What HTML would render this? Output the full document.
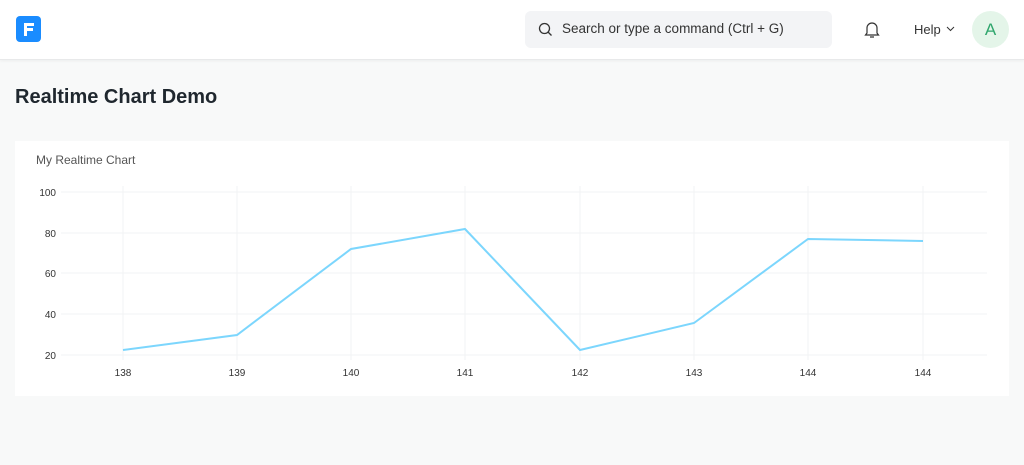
<!DOCTYPE html><html><head><style>
body{margin:0;width:1024px;height:465px;background:#f8f9f9;font-family:"Liberation Sans",sans-serif;overflow:hidden;position:relative}
.nav{position:absolute;top:0;left:0;width:1024px;height:59px;background:#fff;border-bottom:1px solid #e8e9ea;box-shadow:0 1px 3px rgba(0,0,0,.05)}
.logo{position:absolute;left:16px;top:16px;width:25px;height:26px;background:#1a8cff;border-radius:4px}
.search{position:absolute;left:525px;top:11px;width:307px;height:37px;background:#f3f4f6;border-radius:6px;font-size:13.5px;color:#333}
h1{position:absolute;left:15px;top:86px;margin:0;font-size:20px;font-weight:bold;color:#1f272e}
.card{position:absolute;left:15px;top:141px;width:994px;height:255px;background:#fff}
</style></head><body>
<div class="nav">
<div class="logo"><svg width="25" height="26"><path d="M8 7h10v3h-7v2h6v3h-6v5h-3z" fill="#fff"/></svg></div>
<div class="search"><svg style="position:absolute;left:13px;top:11px" width="15" height="15"><circle cx="6.5" cy="6.5" r="5" fill="none" stroke="#333" stroke-width="1.3"/><path d="M10 10l3.5 3.5" stroke="#333" stroke-width="1.3"/></svg><span style="position:absolute;left:37px;top:10px">Search or type a command (Ctrl + G)</span></div>
<svg style="position:absolute;left:863px;top:19px" width="18" height="20"><path d="M4 14V9a5 5 0 0 1 10 0v5l1.5 2h-13zM7 18h4" fill="none" stroke="#333" stroke-width="1.2"/></svg>
<span style="position:absolute;left:914px;top:22px;font-size:13px;color:#333">Help</span>
<svg style="position:absolute;left:946px;top:26px" width="9" height="6"><path d="M1 1l3.5 3.5L8 1" fill="none" stroke="#333"/></svg>
<div style="position:absolute;left:972px;top:11px;width:37px;height:37px;border-radius:50%;background:#e4f5e9;color:#30a66d;font-size:17px;text-align:center;line-height:37px">A</div>
</div>
<h1>Realtime Chart Demo</h1>
<div class="card"></div>
<svg style="position:absolute;left:0;top:0" width="1024" height="465" font-family="Liberation Sans,sans-serif">
<text x="36" y="164" font-size="12" fill="#555">My Realtime Chart</text>
<g stroke="#f2f3f4" stroke-width="1">
<path d="M61 192H987M61 233H987M61 273H987M61 314H987M61 355H987"/>
<path d="M123 186V360M237 186V360M351 186V360M465 186V360M580 186V360M694 186V360M808 186V360M923 186V360"/>
</g>
<g font-size="10" fill="#333" text-anchor="end">
<text x="56" y="196">100</text><text x="56" y="237">80</text><text x="56" y="277">60</text><text x="56" y="318">40</text><text x="56" y="359">20</text></g>
<g font-size="10" fill="#333" text-anchor="middle">
<text x="123" y="376">138</text><text x="237" y="376">139</text><text x="351" y="376">140</text><text x="465" y="376">141</text><text x="580" y="376">142</text><text x="694" y="376">143</text><text x="808" y="376">144</text><text x="923" y="376">144</text></g>
<polyline points="123,350 237,335 351,249 465,229 580,350 694,323 808,239 923,241" fill="none" stroke="#7cd6fd" stroke-width="2"/>
</svg>
</body></html>
